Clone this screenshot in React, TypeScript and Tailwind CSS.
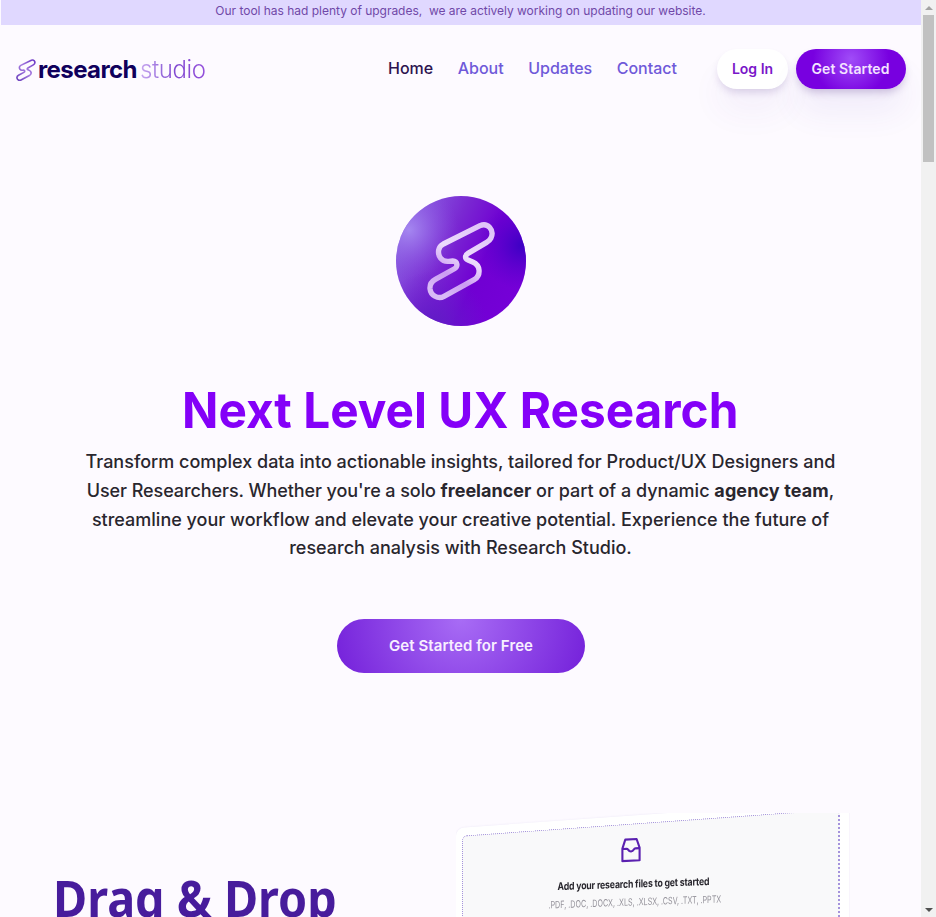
import React from "react";

const S_PATH =
  "M300 137 C323 127 344 150 333 174 Q329 182 320 187 L264 220 C254 226 254 236 264 240 L278 246 C302 256 303 285 284 298 L192 349 C174 359 152 346 150 326 C149 312 155 304 166 298 L222 267 C236 259 232 244 218 243 L206 244 C184 246 173 228 176 210 C178 200 183 196 190 192 Z";

function Logo() {
  return (
    <a className="flex h-6 w-[190px] items-center whitespace-nowrap">
      <svg className="mt-0.5 h-[22px] w-[20px] shrink-0" viewBox="140 124 208 236" preserveAspectRatio="none">
        <defs>
          <linearGradient id="mark" x1="1" y1="0" x2="0" y2="1">
            <stop offset="0" stopColor="#6a35c4" />
            <stop offset="0.5" stopColor="#a57be0" />
            <stop offset="1" stopColor="#6a3fbc" />
          </linearGradient>
        </defs>
        <path d={S_PATH} fill="none" stroke="url(#mark)" strokeWidth="17" />
      </svg>
      <span className="mt-px ml-[2px] w-[102px] text-[24px] leading-6 font-bold tracking-[-0.6px] text-[#10005c]">research</span>
      <span className="mt-px bg-linear-to-r from-[#c9a8f0] via-[#8048d0] to-[#9450dc] bg-clip-text text-[24px] leading-6 font-light tracking-[-0.4px] text-transparent">
        studio
      </span>
    </a>
  );
}

function Header() {
  return (
    <header className="flex h-[88px] items-center pr-[15px] pl-4">
      <Logo />
      <nav className="mb-0.5 ml-auto flex gap-[24.5px] text-[16px] leading-6 font-medium text-[#6f59d9]">
        <a className="text-[#2d1450]">Home</a>
        <a>About</a>
        <a>Updates</a>
        <a>Contact</a>
      </nav>
      <div className="ml-10 flex gap-2 text-[14px] font-semibold">
        <button className="h-10 w-[71px] rounded-full bg-white pb-0.5 text-[#7a16c9] shadow-[0_5px_8px_-2px_rgba(60,20,120,0.18),0_24px_32px_rgba(90,50,180,0.05)]">
          Log In
        </button>
        <button className="h-10 w-[110px] rounded-full bg-[radial-gradient(circle_at_50%_25%,#a04cf8_0%,#7800e0_38px)] pr-px pb-0.5 tracking-[0.1px] text-[#f3e3ff] shadow-[0_5px_8px_-2px_rgba(60,20,120,0.25),0_24px_32px_rgba(90,50,180,0.07)]">
          Get Started
        </button>
      </div>
    </header>
  );
}

function Emblem() {
  return (
    <svg className="size-[130px]" viewBox="48 48 390 390">
      <defs>
        <linearGradient id="disc" x1="0" y1="0.25" x2="1" y2="0.7">
          <stop offset="0" stopColor="#8c66e4" />
          <stop offset="0.38" stopColor="#7a28d2" />
          <stop offset="0.65" stopColor="#7000d2" />
          <stop offset="1" stopColor="#7600d8" />
        </linearGradient>
        <radialGradient id="glow" cx="0.1" cy="0.26" r="0.38">
          <stop offset="0" stopColor="#a88cf2" stopOpacity="0.9" />
          <stop offset="1" stopColor="#8a50e0" stopOpacity="0" />
        </radialGradient>
        <radialGradient id="deep" cx="0.97" cy="0.38" r="0.34">
          <stop offset="0" stopColor="#3c00c4" />
          <stop offset="1" stopColor="#5800cc" stopOpacity="0" />
        </radialGradient>
        <radialGradient id="low" cx="0.28" cy="1" r="0.42">
          <stop offset="0" stopColor="#5f1cc4" />
          <stop offset="1" stopColor="#661ccc" stopOpacity="0" />
        </radialGradient>
        <linearGradient id="stroke" x1="0.8" y1="0" x2="0.3" y2="1">
          <stop offset="0" stopColor="#e0c4f8" />
          <stop offset="0.45" stopColor="#ecdcfc" />
          <stop offset="0.75" stopColor="#cb9cf2" />
          <stop offset="1" stopColor="#d9baf6" />
        </linearGradient>
      </defs>
      <circle cx="243" cy="243" r="195" fill="url(#disc)" />
      <circle cx="243" cy="243" r="195" fill="url(#glow)" />
      <circle cx="243" cy="243" r="195" fill="url(#low)" />
      <circle cx="243" cy="243" r="195" fill="url(#deep)" />
      <path d={S_PATH} fill="none" stroke="url(#stroke)" strokeWidth="16" strokeLinejoin="round" />
    </svg>
  );
}

function Hero() {
  return (
    <section className="flex flex-col items-center pt-[83px] text-center">
      <Emblem />
      <h1 className="mt-[53px] scale-x-[0.955] text-[50px] leading-[62px] font-bold whitespace-nowrap text-[#8400f8]">
        Next Level UX Research
      </h1>
      <p className="mt-[7px] text-[18px] leading-[28.8px] font-medium whitespace-nowrap text-[#29262e]">
        Transform complex data into actionable insights, tailored for Product/UX Designers and
        <br />
        <span className="tracking-[-0.08px]">User Researchers. Whether you're a solo </span>
        <strong className="font-bold">freelancer</strong> or part of a dynamic{" "}
        <strong className="font-bold tracking-[0.1px]">agency team</strong>,
        <br />
        streamline your workflow and elevate your creative potential. Experience the future of
        <br />
        research analysis with Research Studio.
      </p>
      <button className="mt-[56px] h-[54px] w-[248px] rounded-full bg-[radial-gradient(circle_at_50%_0%,#a86cf5_0%,#7623db_130px)] pl-px text-[15px] font-semibold tracking-[0.08px] text-[#f8efff]">
        Get Started for Free
      </button>
    </section>
  );
}

function InboxIcon() {
  return (
    <svg className="h-[25px] w-[20px]" viewBox="0 0 20 25" fill="none" stroke="#5b21b0" strokeWidth="2.1" strokeLinejoin="round">
      <path d="M4.3 2 L15.6 1.4 L18.6 10 V22.6 L1.4 23.5 V11 Z" />
      <path d="M1.4 11.4 L6 11.2 C7.6 11.2 7 14 10 13.9 C13 13.7 12.6 10.8 14.2 10.8 L18.6 10.5" />
    </svg>
  );
}

function DropCard() {
  return (
    <div className="h-[104px] w-[394px] overflow-hidden">
      <div className="mt-[15px] h-[200px] w-[393px] origin-top-left skew-y-[-4.05deg] rounded-[8px] bg-white p-[6px] pt-[8px] pr-[9px] shadow-[0_0_2px_rgba(100,80,180,0.12)]">
        <div className="flex h-full flex-col items-center rounded-[5px] border border-r-2 border-dotted border-[#a593dc] bg-[#f9f9fa] pr-[39px]">
          <div className="mt-[13px] flex skew-y-[2.1deg] flex-col items-center whitespace-nowrap">
            <div className="skew-y-[1.7deg]">
              <InboxIcon />
            </div>
            <div className="mt-[14.5px] ml-[6px] scale-x-[0.83] text-[10.5px] leading-[14px] font-bold tracking-[-0.2px] text-[#29272e]">
              Add your research files to get started
            </div>
            <div className="mt-[3px] ml-[8px] scale-x-[0.715] text-[10px] leading-[14px] text-[#94929a]">
              .PDF, .DOC, .DOCX, .XLS, .XLSX, .CSV, .TXT, .PPTX
            </div>
          </div>
        </div>
      </div>
    </div>
  );
}

function Scrollbar() {
  return (
    <div className="flex w-[15px] flex-col items-center justify-between bg-[#f1f1f1]">
      <div className="flex flex-col items-center">
        <div className="flex h-[15px] items-center pt-px">
          <div className="border-x-4 border-b-4 border-x-transparent border-b-[#a3a3a3]" />
        </div>
        <div className="h-[147px] w-[11px] bg-[#c1c1c1]" />
      </div>
      <div className="flex h-[15px] items-center">
        <div className="border-x-4 border-t-4 border-x-transparent border-t-[#505050]" />
      </div>
    </div>
  );
}

export default function App() {
  return (
    <div className="flex h-[917px] w-[936px] overflow-hidden bg-[#fdfaff] font-['Inter',sans-serif]">
      <main className="w-[921px] overflow-hidden">
        <div className="ml-px h-[25px] bg-[#e0d8ff] pr-px text-center text-[12px] leading-[22px] tracking-[-0.02px] whitespace-pre text-[#7048a8]">
          Our tool has had plenty of upgrades,{"  "}we are actively working on updating our website.
        </div>
        <Header />
        <Hero />
        <section className="mt-[140px] flex justify-between pr-[71px] pl-[53px]">
          <h2 className="w-[284px] origin-left scale-x-[0.934] pt-[54px] font-['Noto_Sans',sans-serif] text-[50px] leading-[62px] font-bold whitespace-nowrap text-[#471c9c]">
            Drag &amp; Drop
          </h2>
          <DropCard />
        </section>
      </main>
      <Scrollbar />
    </div>
  );
}
